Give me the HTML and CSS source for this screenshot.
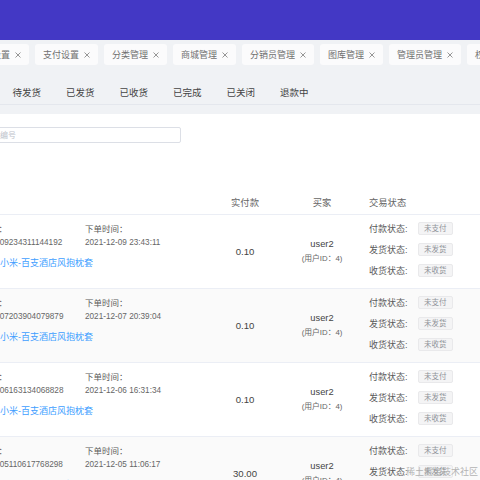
FILE: index.html
```html
<!DOCTYPE html>
<html lang="zh-CN">
<head>
    <meta charset="UTF-8">
    <meta name="viewport" content="width=device-width, initial-scale=1.0">
    <title>订单管理</title>
    <link rel="stylesheet" href="styles.css">
</head>
<body>
    <div class="page">
        <div class="topbar"></div>

        <!-- Open page tabs -->
        <div class="tabs">
            <span class="tab">系统设置 <svg class="close" viewBox="0 0 6 6"><path d="M0.5 0.5L5.5 5.5M5.5 0.5L0.5 5.5"/></svg></span>
            <span class="tab">支付设置 <svg class="close" viewBox="0 0 6 6"><path d="M0.5 0.5L5.5 5.5M5.5 0.5L0.5 5.5"/></svg></span>
            <span class="tab">分类管理 <svg class="close" viewBox="0 0 6 6"><path d="M0.5 0.5L5.5 5.5M5.5 0.5L0.5 5.5"/></svg></span>
            <span class="tab">商城管理 <svg class="close" viewBox="0 0 6 6"><path d="M0.5 0.5L5.5 5.5M5.5 0.5L0.5 5.5"/></svg></span>
            <span class="tab">分销员管理 <svg class="close" viewBox="0 0 6 6"><path d="M0.5 0.5L5.5 5.5M5.5 0.5L0.5 5.5"/></svg></span>
            <span class="tab">图库管理 <svg class="close" viewBox="0 0 6 6"><path d="M0.5 0.5L5.5 5.5M5.5 0.5L0.5 5.5"/></svg></span>
            <span class="tab">管理员管理 <svg class="close" viewBox="0 0 6 6"><path d="M0.5 0.5L5.5 5.5M5.5 0.5L0.5 5.5"/></svg></span>
            <span class="tab">权限管理 <svg class="close" viewBox="0 0 6 6"><path d="M0.5 0.5L5.5 5.5M5.5 0.5L0.5 5.5"/></svg></span>
        </div>

        <!-- Order status filter -->
        <div class="status-tabs">
            <a href="#">全部</a>
            <a href="#">待发货</a>
            <a href="#">已发货</a>
            <a href="#">已收货</a>
            <a href="#">已完成</a>
            <a href="#">已关闭</a>
            <a href="#">退款中</a>
        </div>

        <div class="card">
            <div class="search">
                <input type="text" placeholder="请输入订单编号">
            </div>

            <div class="table">
                <div class="thead">
                    <div class="cell order-cell">订单信息</div>
                    <div class="cell center">实付款</div>
                    <div class="cell center">买家</div>
                    <div class="cell status-head">交易状态</div>
                    <div class="cell center">操作</div>
                </div>

                <div class="row">
                    <div class="cell order-cell">
                        <div class="order-info">
                            <span class="label">订单号：</span>
                            <span class="label">下单时间：</span>
                            <span class="value">20211209234311144192</span>
                            <span class="value">2021-12-09 23:43:11</span>
                            <div class="product"><span class="label">商品：</span><a href="#">小米-百支酒店风抱枕套</a></div>
                        </div>
                    </div>
                    <div class="cell center amount">0.10</div>
                    <div class="cell center buyer">
                        <div class="name">user2</div>
                        <div class="uid">(用户ID：4)</div>
                    </div>
                    <div class="cell status">
                        <div class="line"><span class="status-label">付款状态:</span><span class="badge">未支付</span></div>
                        <div class="line"><span class="status-label">发货状态:</span><span class="badge">未发货</span></div>
                        <div class="line"><span class="status-label">收货状态:</span><span class="badge">未收货</span></div>
                    </div>
                    <div class="cell"></div>
                </div>

                <div class="row">
                    <div class="cell order-cell">
                        <div class="order-info">
                            <span class="label">订单号：</span>
                            <span class="label">下单时间：</span>
                            <span class="value">20211207203904079879</span>
                            <span class="value">2021-12-07 20:39:04</span>
                            <div class="product"><span class="label">商品：</span><a href="#">小米-百支酒店风抱枕套</a></div>
                        </div>
                    </div>
                    <div class="cell center amount">0.10</div>
                    <div class="cell center buyer">
                        <div class="name">user2</div>
                        <div class="uid">(用户ID：4)</div>
                    </div>
                    <div class="cell status">
                        <div class="line"><span class="status-label">付款状态:</span><span class="badge">未支付</span></div>
                        <div class="line"><span class="status-label">发货状态:</span><span class="badge">未发货</span></div>
                        <div class="line"><span class="status-label">收货状态:</span><span class="badge">未收货</span></div>
                    </div>
                    <div class="cell"></div>
                </div>

                <div class="row">
                    <div class="cell order-cell">
                        <div class="order-info">
                            <span class="label">订单号：</span>
                            <span class="label">下单时间：</span>
                            <span class="value">20211206163134068828</span>
                            <span class="value">2021-12-06 16:31:34</span>
                            <div class="product"><span class="label">商品：</span><a href="#">小米-百支酒店风抱枕套</a></div>
                        </div>
                    </div>
                    <div class="cell center amount">0.10</div>
                    <div class="cell center buyer">
                        <div class="name">user2</div>
                        <div class="uid">(用户ID：4)</div>
                    </div>
                    <div class="cell status">
                        <div class="line"><span class="status-label">付款状态:</span><span class="badge">未支付</span></div>
                        <div class="line"><span class="status-label">发货状态:</span><span class="badge">未发货</span></div>
                        <div class="line"><span class="status-label">收货状态:</span><span class="badge">未收货</span></div>
                    </div>
                    <div class="cell"></div>
                </div>

                <div class="row">
                    <div class="cell order-cell">
                        <div class="order-info">
                            <span class="label">订单号：</span>
                            <span class="label">下单时间：</span>
                            <span class="value">20211205110617768298</span>
                            <span class="value">2021-12-05 11:06:17</span>
                            <div class="product"><span class="label">商品：</span><a href="#">小米-百支酒店风抱枕套</a></div>
                        </div>
                    </div>
                    <div class="cell center amount">30.00</div>
                    <div class="cell center buyer">
                        <div class="name">user2</div>
                        <div class="uid">(用户ID：4)</div>
                    </div>
                    <div class="cell status">
                        <div class="line"><span class="status-label">付款状态:</span><span class="badge">未支付</span></div>
                        <div class="line"><span class="status-label">发货状态:</span><span class="badge">未发货</span></div>
                        <div class="line"><span class="status-label">收货状态:</span><span class="badge">未收货</span></div>
                    </div>
                    <div class="cell"></div>
                </div>
            </div>
        </div>
    </div>

    <div class="watermark">稀土掘金技术社区</div>
</body>
</html>
```

FILE: styles.css
```css
body {
    margin: 0;
    width: 480px;
    height: 480px;
    overflow: hidden;
    position: relative;
    font-family: "Liberation Sans", "Noto Sans CJK SC", sans-serif;
    background-color: #f0f2f5;
}

.page {
    margin-left: -70px;
    width: 760px;
}

.topbar {
    height: 40px;
    background-color: #4338c5;
}

.tabs {
    display: flex;
    gap: 6px;
    padding: 4px 0 4px 36px;
}

.tab {
    display: flex;
    align-items: center;
    gap: 5px;
    height: 21px;
    padding: 0 8px;
    background-color: #fbfbfc;
    border-radius: 3px;
    font-size: 9px;
    color: #707070;
    white-space: nowrap;
    flex-shrink: 0;
}

.close {
    width: 6px;
    height: 6px;
    stroke: #8a8a8a;
    stroke-width: 0.9;
    fill: none;
}

.status-tabs {
    display: flex;
    align-items: flex-end;
    height: 36px;
    box-sizing: border-box;
    padding: 0 0 5px 26px;
    border-bottom: 1px solid #e4e7ed;
}

.status-tabs a {
    padding: 0 12.5px;
    font-size: 9.5px;
    line-height: 12px;
    color: #444;
    text-decoration: none;
}

.card {
    margin: 9px 0 0 8px;
    padding: 13px 14px 0;
    background-color: #fff;
    height: 400px;
}

.search input {
    display: block;
    width: 229px;
    height: 16px;
    box-sizing: border-box;
    padding: 0 0 0 7px;
    border: 1px solid #dcdfe6;
    border-radius: 2px;
    font-family: inherit;
    font-size: 8px;
    outline: none;
}

.search input::placeholder {
    color: #c0c4cc;
}

.table {
    margin-top: 47px;
}

.thead, .row {
    display: grid;
    grid-template-columns: 258px 70px 84px 170px 120px;
    box-sizing: border-box;
    border-bottom: 1px solid #ebeef5;
}

.thead {
    height: 25px;
    align-items: center;
    font-size: 9.3px;
    color: #666;
}

.thead .order-cell {
    visibility: hidden;
}

.row {
    height: 74px;
}

.row:nth-child(odd) {
    background-color: #fafafa;
}

.center {
    text-align: center;
}

.order-cell {
    padding-left: 21px;
}

.status-head {
    padding-left: 5px;
}

.order-info {
    display: grid;
    grid-template-columns: 112px 1fr;
    padding-top: 8px;
}

.label {
    font-size: 8.5px;
    line-height: 12px;
    color: #5a5a5a;
}

.value {
    margin-top: 2px;
    font-size: 8.2px;
    line-height: 12px;
    color: #666;
}

.product {
    grid-column: 1 / 3;
    margin-top: 8px;
    display: flex;
    align-items: center;
    line-height: 12px;
}

.product .label {
    font-size: 9px;
}

.product a {
    font-size: 9px;
    color: #409eff;
    text-decoration: none;
}

.amount {
    align-self: center;
    font-size: 9.6px;
    color: #444;
}

.buyer {
    align-self: center;
}

.buyer .name {
    font-size: 9.3px;
    line-height: 14px;
    color: #444;
}

.buyer .uid {
    margin-top: 1px;
    font-size: 7.8px;
    line-height: 14px;
    color: #666;
}

.status {
    padding: 3px 0 0 5px;
}

.line {
    display: flex;
    align-items: center;
    height: 21px;
}

.status-label {
    width: 49px;
    font-size: 9px;
    color: #5a5a5a;
}

.badge {
    height: 13px;
    line-height: 11px;
    box-sizing: border-box;
    padding: 0 5px;
    background-color: #f4f4f5;
    border: 1px solid #e9e9eb;
    border-radius: 2px;
    font-size: 7.5px;
    color: #909399;
}

/* site watermark over the corner of the screenshot */
.watermark {
    position: absolute;
    left: 406px;
    top: 466px;
    font-size: 9px;
    line-height: 13px;
    color: rgba(160, 160, 160, 0.8);
    white-space: nowrap;
}
```
